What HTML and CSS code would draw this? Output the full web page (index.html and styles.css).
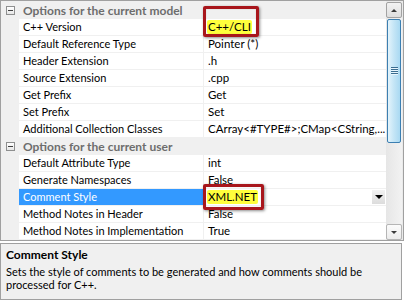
FILE: index.html
```html
<!DOCTYPE html>
<html>
<head>
<meta charset="utf-8">
<link rel="stylesheet" href="styles.css">
</head>
<body>
<div class="pg">
  <div class="grid">
    <div class="rows">
      <div class="cat"><span class="tog-cell"><span class="tog"></span></span><span class="cat-t">Options for the current model</span></div>
      <div class="row"><span class="lbl">C++ Version</span><span class="val"><span class="hl">C++/CLI</span></span></div>
      <div class="row"><span class="lbl">Default Reference Type</span><span class="val">Pointer (*)</span></div>
      <div class="row"><span class="lbl">Header Extension</span><span class="val">.h</span></div>
      <div class="row"><span class="lbl">Source Extension</span><span class="val">.cpp</span></div>
      <div class="row"><span class="lbl">Get Prefix</span><span class="val">Get</span></div>
      <div class="row"><span class="lbl">Set Prefix</span><span class="val">Set</span></div>
      <div class="row"><span class="lbl">Additional Collection Classes</span><span class="val">CArray&lt;#TYPE#&gt;;CMap&lt;CString,...</span></div>
      <div class="cat"><span class="tog-cell"><span class="tog"></span></span><span class="cat-t">Options for the current user</span></div>
      <div class="row"><span class="lbl">Default Attribute Type</span><span class="val">int</span></div>
      <div class="row"><span class="lbl">Generate Namespaces</span><span class="val">False</span></div>
      <div class="row sel"><span class="lbl">Comment Style</span><span class="val"><span class="hl">XML.NET</span><span class="dd"><span class="tri"></span></span></span></div>
      <div class="row"><span class="lbl">Method Notes in Header</span><span class="val">False</span></div>
      <div class="row"><span class="lbl">Method Notes in Implementation</span><span class="val">True</span></div>
    </div>
    <div class="sb">
      <div class="sb-btn"><span class="arr up"></span></div>
      <div class="sb-track">
        <div class="thumb"><span class="grip"></span><span class="grip"></span><span class="grip"></span><span class="grip"></span></div>
      </div>
      <div class="sb-btn lite"><span class="arr down"></span></div>
    </div>
  </div>
  <div class="desc">
    <div class="desc-t">Comment Style</div>
    <div class="desc-b">Sets the style of comments to be generated and how comments should be processed for C++.</div>
  </div>
  <div class="mark m1"></div>
  <div class="mark m2"></div>
</div>
</body>
</html>
```

FILE: styles.css
```css
* { box-sizing: border-box; }
html, body { margin: 0; padding: 0; background: #ffffff; }
body { font-family: Lato, "Liberation Sans", Arial, sans-serif; font-size: 11px; color: #000; }

.pg { position: relative; width: 404px; height: 301px; }

.grid {
  display: flex;
  height: 241px;
  border: 1px solid #a0a0a0;
  background: #f0f0f0;
}
.rows { flex: 1; display: flex; flex-direction: column; padding-top: 1px; }

.cat, .row { height: 17px; flex: none; display: flex; }
.cat { align-items: center; background: #f0f0f0; }
.tog-cell { width: 18px; height: 16px; display: flex; align-items: center; justify-content: center; }
.tog {
  width: 9px; height: 9px; border: 1px solid #8e8f8f; background: linear-gradient(#ffffff, #e6e6e6);
  position: relative; margin-left: 1px;
}
.tog::after { content: ""; position: absolute; left: 1px; top: 3px; width: 5px; height: 1px; background: #404040; }
.cat-t { padding-left: 4px; font-weight: bold; color: #6d6d6d; font-size: 12px; }

.row { padding-left: 18px; padding-bottom: 1px; background: #f0f0f0; }
.lbl {
  width: 184px; background: #fff; padding-left: 4px; line-height: 16px; white-space: nowrap; overflow: hidden;
}
.val {
  flex: 1; margin-left: 1px; background: #fff; padding-left: 4px; line-height: 16px; white-space: nowrap;
  display: flex; align-items: center; font-size: 11.5px;
}
.sel .lbl { background: #3399ff; color: #fff; }
.hl { background: #ffff3c; border-radius: 2px; padding: 0 1px; margin-left: -1px; line-height: 14px; }
.dd {
  margin-left: auto; margin-right: 1px; width: 13px; height: 14px; background: linear-gradient(#f2f2f2, #dcdcdc);
  display: flex; align-items: center; justify-content: center;
}
.tri { width: 0; height: 0; border-left: 4px solid transparent; border-right: 4px solid transparent; border-top: 4px solid #000; }

.sb { width: 17px; display: flex; flex-direction: column; padding: 1px 1px 0 0; background: #eaeaea; }
.sb-btn {
  height: 16px; border: 1px solid #a2a2a2; border-radius: 2px; background: linear-gradient(#f2f2f2, #dedede);
  display: flex; align-items: center; justify-content: center; flex: none;
}
.sb-btn.lite { background: linear-gradient(#fbfbfb, #ececec); border-color: #b5b5b5; }
.arr { width: 0; height: 0; border-left: 3px solid transparent; border-right: 3px solid transparent; }
.arr.up { border-bottom: 3px solid #3a3a3a; }
.arr.down { border-top: 3px solid #3a3a3a; }
.sb-track { flex: 1; padding: 1px 0 0 1px; background: linear-gradient(90deg, #e6e6e6, #f2f2f2); }
.thumb {
  height: 124px; width: 14px; border: 1px solid #3c7fb1; border-radius: 2px;
  background: linear-gradient(90deg, #e3f4fc, #c4e5f6 50%, #a9d9f2);
  display: flex; flex-direction: column; align-items: center; padding-top: 47px;
}
.grip { width: 7px; height: 1px; background: #3a6d90; box-shadow: 0 1px 0 #e8f6fd; margin-bottom: 1px; }

.desc {
  margin-top: 2px; width: 402px; height: 57px; border: 1px solid #a0a0a0; background: #f0f0f0;
  padding: 4px 5px 0 5px;
}
.desc-t { font-weight: bold; font-size: 12px; line-height: 14px; }
.desc-b { margin-top: 3px; line-height: 13px; width: 370px; }

.mark {
  position: absolute; border: 3px solid #a8161c; border-radius: 2px;
  box-shadow: 1px 1px 3px rgba(0, 0, 0, 0.45), inset 0 0 1px rgba(0,0,0,0.3);
}
.m1 { left: 203px; top: 6px; width: 56px; height: 31px; }
.m2 { left: 203px; top: 184px; width: 61px; height: 26px; }
```
